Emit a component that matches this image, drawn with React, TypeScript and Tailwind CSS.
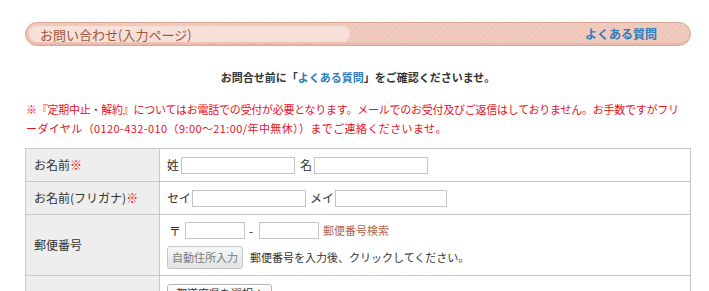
const jp = "font-['Noto_Sans_CJK_JP','Noto_Sans',sans-serif]";

function TextInput({ w }: { w: string }) {
  return <input type="text" className={`h-[17px] ${w} border border-[#c4c4c4] bg-white`} />;
}

function Row({
  label,
  required,
  h,
  children,
}: {
  label: string;
  required?: boolean;
  h: string;
  children: React.ReactNode;
}) {
  return (
    <tr className={h}>
      <th className="w-[134px] border border-[#c8c8c8] bg-[#eeeeee] pl-[8px] text-left align-middle text-[12px] font-normal text-[#333]">
        {label}
        {required && <span className="text-[#ff0000]">※</span>}
      </th>
      <td className="border border-[#c8c8c8] pl-[7px] align-middle text-[12px] text-[#333]">{children}</td>
    </tr>
  );
}

export default function App() {
  return (
    <div className={`${jp} h-[291px] w-[709px] overflow-hidden bg-white pt-[22px]`}>
      <div className="ml-[25px] w-[666px]">
        {/* title bar */}
        <div className="flex h-[24px] items-center justify-between rounded-full border border-[#daa796] bg-[repeating-linear-gradient(135deg,#efc7b9_0px,#efc7b9_2px,#f1cbbe_2px,#f1cbbe_4px)] pl-[3px] pr-[33px] shadow-[inset_0_-2px_2px_rgba(200,120,100,0.2)]">
          <div className="flex h-[16px] w-[321px] items-center rounded-full bg-[#f6e0d8] pl-[11px] text-[13px] leading-none text-[#a0553c]">
            お問い合わせ(入力ページ)
          </div>
          <a className="text-[12px] font-bold leading-none text-[#2b7dbc]">よくある質問</a>
        </div>

        <p className="mt-[24px] text-center text-[11px] font-bold leading-[14px] text-[#333]">
          お問合せ前に「<span className="text-[#2b7dbc]">よくある質問</span>」をご確認くださいませ。
        </p>

        <p className="mt-[16px] pl-[1px] text-[11px] leading-[19px] tracking-[-0.25px] text-[#e8101e]">
          <span className="whitespace-nowrap">
            ※『定期中止・解約』についてはお電話での受付が必要となります。メールでのお受付及びご返信はしておりません。お手数ですがフリ
          </span>
          <br />
          <span className="tracking-[0.4px]">ーダイヤル（0120-432-010（9:00～21:00/年中無休））までご連絡くださいませ。</span>
        </p>

        <table className="mt-[10px] w-full border-collapse">
          <tbody>
            <Row label="お名前" required h="h-[33px]">
              <div className="flex items-center">
                <span>姓</span>
                <span className="ml-[2px]"><TextInput w="w-[114px]" /></span>
                <span className="ml-[5px]">名</span>
                <span className="ml-[2px]"><TextInput w="w-[114px]" /></span>
              </div>
            </Row>
            <Row label="お名前(フリガナ)" required h="h-[33px]">
              <div className="flex items-center">
                <span>セイ</span>
                <span className="ml-[1px]"><TextInput w="w-[114px]" /></span>
                <span className="ml-[4px]">メイ</span>
                <span className="ml-[1px]"><TextInput w="w-[112px]" /></span>
              </div>
            </Row>
            <Row label="郵便番号" h="h-[61px]">
              <div className="flex flex-col gap-[6px] py-[1px]">
                <div className="flex items-center">
                  <span className="ml-[2px]">〒</span>
                  <span className="ml-[4px]"><TextInput w="w-[60px]" /></span>
                  <span className="ml-[4px] w-[10px]">-</span>
                  <TextInput w="w-[60px]" />
                  <a className="ml-[4px] text-[11px] text-[#b4654a]">郵便番号検索</a>
                </div>
                <div className="flex items-center">
                  <button className="h-[23px] w-[76px] rounded-[3px] border border-[#c6c6c6] bg-gradient-to-b from-[#f7f7f7] to-[#e2e2e2] text-[11px] text-[#7a7a7a]">
                    自動住所入力
                  </button>
                  <span className="ml-[7px] text-[11px]">郵便番号を入力後、クリックしてください。</span>
                </div>
              </div>
            </Row>
            <Row label="" h="h-[40px]">
              <div className="flex h-[40px] items-start pt-[8px]">
                <span className="flex h-[18px] items-center rounded-[3px] border border-[#b5b5b5] bg-gradient-to-b from-white to-[#e8e8e8] px-[8px] text-[11px] text-[#333]">
                  都道府県を選択 <span className="ml-[2px] text-[8px]">▲</span>
                </span>
              </div>
            </Row>
          </tbody>
        </table>
      </div>
    </div>
  );
}
